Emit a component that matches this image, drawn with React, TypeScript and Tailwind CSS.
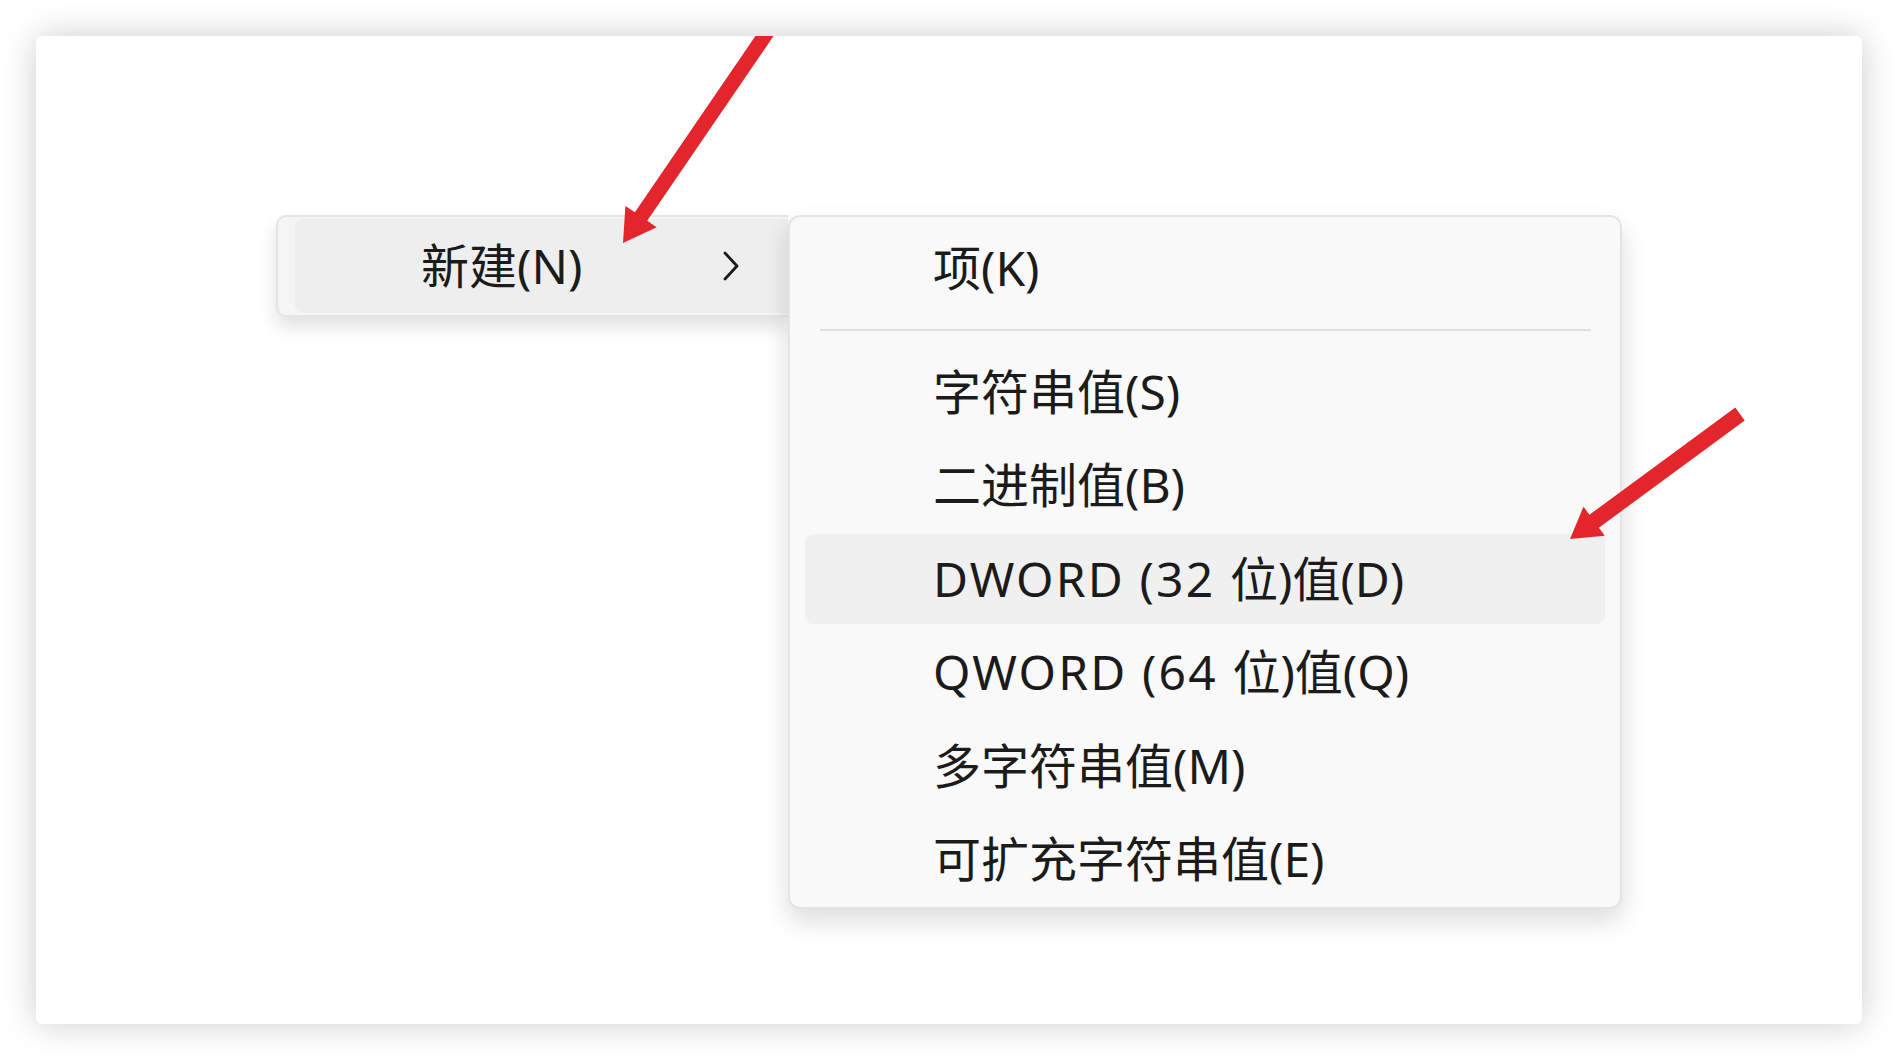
import type { ReactNode } from 'react'

type Pt = [number, number]

// arrow polygon from tail to tip, drawn as a shaft plus head
function arrowPoints(tail: Pt, tip: Pt, shaft: number, headLen: number, headHalf: number) {
  const dx = tip[0] - tail[0]
  const dy = tip[1] - tail[1]
  const len = Math.hypot(dx, dy)
  const ux = dx / len
  const uy = dy / len
  const nx = -uy
  const ny = ux
  const bx = tip[0] - ux * headLen
  const by = tip[1] - uy * headLen
  const w = shaft / 2
  const pts: Pt[] = [
    [tail[0] + nx * w, tail[1] + ny * w],
    [bx + nx * w, by + ny * w],
    [bx + nx * headHalf, by + ny * headHalf],
    tip,
    [bx - nx * headHalf, by - ny * headHalf],
    [bx - nx * w, by - ny * w],
    [tail[0] - nx * w, tail[1] - ny * w],
  ]
  return pts.map(p => `${p[0].toFixed(1)},${p[1].toFixed(1)}`).join(' ')
}

// latin prefix gets a little extra tracking (Segoe-like widths)
const items = [
  { prefix: '', label: '字符串值(S)' },
  { prefix: '', label: '二进制值(B)' },
  { prefix: 'DWORD (32 ', label: '位)值(D)', active: true },
  { prefix: 'QWORD (64 ', label: '位)值(Q)' },
  { prefix: '', label: '多字符串值(M)' },
  { prefix: '', label: '可扩充字符串值(E)' },
]

function Row({ children, active }: { children: ReactNode; active?: boolean }) {
  return (
    <div className="h-[93.5px] pt-[2px] pb-[1px]">
      <div
        className={`h-full rounded-[8px] flex items-center pl-[128px] ${active ? 'bg-[#f0f0f0]' : ''}`}
      >
        <span className="text-[48px] leading-none text-[#1b1b1b] whitespace-nowrap">{children}</span>
      </div>
    </div>
  )
}

export default function App() {
  return (
    <div
      className="w-full h-[1060px] bg-white p-[36px]"
      style={{ fontFamily: '"Noto Sans", "Noto Sans CJK SC", sans-serif' }}
    >
      <div className="relative h-full rounded-[6px] bg-white shadow-[0_0_34px_rgba(0,0,0,0.2)] overflow-hidden">
        <div className="flex items-start pt-[179px] pl-[240px]">
          {/* parent menu, only the hovered item is visible */}
          <div className="w-[512px] h-[102px] rounded-l-[10px] border-2 border-r-0 border-[#e4e4e4] bg-[#f5f5f5] pl-[17px] py-[2px] shadow-[0_10px_18px_rgba(0,0,0,0.12)]">
            <div className="h-full rounded-l-[8px] bg-[#eeeeee] flex items-center justify-between pl-[126px] pr-[48px]">
              <span className="text-[48px] leading-none text-[#1b1b1b] whitespace-nowrap">新建(N)</span>
              <svg width="18" height="32" viewBox="0 0 18 32" fill="none">
                <path d="M3 3 L15 16 L3 29" stroke="#1b1b1b" strokeWidth="2.8" strokeLinecap="round" strokeLinejoin="round" />
              </svg>
            </div>
          </div>

          {/* submenu */}
          <div className="relative z-10 w-[834px] rounded-[12px] border-2 border-[#e4e4e4] bg-[#f9f9f9] pt-[4px] pb-[1.5px] px-[15px] shadow-[0_12px_26px_rgba(0,0,0,0.14)]">
            <Row>项(K)</Row>
            <div className="h-[30px] flex items-center pl-[15px] pr-[14px]">
              <div className="h-[2px] w-full bg-[#e0e0e0]" />
            </div>
            {items.map(it => (
              <Row key={it.label + it.prefix} active={it.active}>
                {it.prefix && <span className="tracking-[0.045em]">{it.prefix}</span>}
                {it.label}
              </Row>
            ))}
          </div>
        </div>

        {/* red annotation arrows */}
        <svg className="absolute inset-0 w-full h-full pointer-events-none z-20">
          <polygon points={arrowPoints([790, -90], [587, 207], 15, 32, 19)} fill="#e3262b" />
          <polygon points={arrowPoints([1704, 378], [1534, 503], 16, 30, 18)} fill="#e3262b" />
        </svg>
      </div>
    </div>
  )
}
